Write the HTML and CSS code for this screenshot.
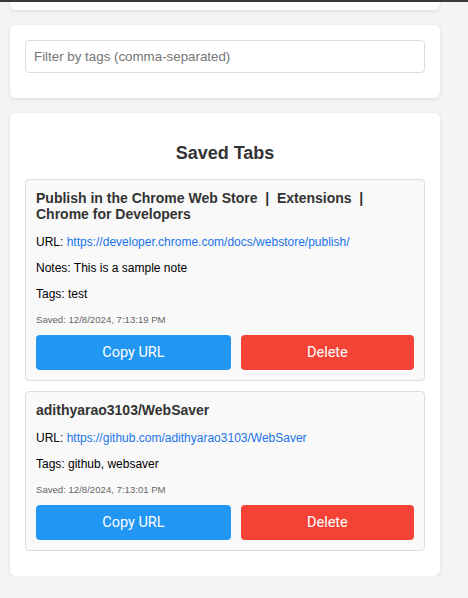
FILE: index.html
```html
<!DOCTYPE html>
<html>
<head>
<meta charset="utf-8">
<link rel="stylesheet" href="styles.css">
</head>
<body>
<div class="topline"></div>
<div class="page">
  <div class="card card-stub"></div>
  <div class="card filter-card">
    <input class="filter" type="text" placeholder="Filter by tags (comma-separated)">
  </div>
  <div class="card list-card">
    <h2 class="list-title">Saved Tabs</h2>
    <div class="tab-item">
      <h3 class="tab-title">Publish in the Chrome Web Store &nbsp;|&nbsp; Extensions &nbsp;|&nbsp; Chrome for Developers</h3>
      <p class="tab-line">URL: <a class="tab-link" href="#">https://developer.chrome.com/docs/webstore/publish/</a></p>
      <p class="tab-line">Notes: This is a sample note</p>
      <p class="tab-line">Tags: test</p>
      <p class="tab-saved">Saved: 12/8/2024, 7:13:19 PM</p>
      <div class="tab-actions">
        <button class="btn btn-copy">Copy URL</button>
        <button class="btn btn-delete">Delete</button>
      </div>
    </div>
    <div class="tab-item">
      <h3 class="tab-title">adithyarao3103/WebSaver</h3>
      <p class="tab-line">URL: <a class="tab-link" href="#">https://github.com/adithyarao3103/WebSaver</a></p>
      <p class="tab-line">Tags: github, websaver</p>
      <p class="tab-saved">Saved: 12/8/2024, 7:13:01 PM</p>
      <div class="tab-actions">
        <button class="btn btn-copy">Copy URL</button>
        <button class="btn btn-delete">Delete</button>
      </div>
    </div>
  </div>
</div>
</body>
</html>
```
FILE: styles.css
```css
html, body {
  margin: 0;
  padding: 0;
}
body {
  background: #f4f4f4;
  font-family: "Liberation Sans", Arial, sans-serif;
  color: #000;
  overflow: hidden;
}
.topline {
  height: 2px;
  background: #3a3a3a;
}
.page {
  width: 430px;
  margin-left: 10px;
  display: flex;
  flex-direction: column;
  gap: 15px;
}
.card {
  background: #fff;
  border-radius: 6px;
  box-shadow: 0 1px 4px rgba(0,0,0,0.1);
  padding: 15px;
}
.card-stub {
  height: 8px;
  padding: 0;
  border-radius: 0 0 6px 6px;
}
.filter-card {
  padding-bottom: 25px;
}
.filter {
  display: block;
  width: 100%;
  box-sizing: border-box;
  height: 33px;
  padding: 0 8px;
  border: 1px solid #ddd;
  border-radius: 4px;
  font-family: "Liberation Sans", Arial, sans-serif;
  font-size: 13.333px;
  color: #333;
  outline: none;
}
.filter::placeholder {
  color: #757575;
}
.list-card {
  padding-bottom: 15px;
}
.list-title {
  margin: 15px 0;
  text-align: center;
  font-size: 18px;
  color: #333;
  line-height: 21px;
}
.tab-item {
  background: #f9f9f9;
  border: 1px solid #ddd;
  border-radius: 4px;
  padding: 10px;
  margin-bottom: 10px;
}
.tab-title {
  margin: 0 0 13px;
  font-size: 14px;
  line-height: 16px;
  color: #333;
}
.tab-line {
  margin: 0 0 12px;
  font-size: 12px;
  line-height: 14px;
}
.tab-link {
  color: #1a73e8;
  text-decoration: none;
}
.tab-saved {
  margin: 13px 0 10px;
  font-size: 9.6px;
  line-height: 11px;
  color: #666;
}
.tab-actions {
  display: flex;
  gap: 10px;
}
.btn {
  flex: 1 1 auto;
  height: 35px;
  border: none;
  border-radius: 4px;
  color: #fff;
  font-family: Roboto, "Liberation Sans", Arial, sans-serif;
  font-size: 14.5px;
  font-weight: 400;
  padding: 0 10px;
}
.btn-copy { background: #2196f3; }
.btn-delete { background: #f44336; }
```
